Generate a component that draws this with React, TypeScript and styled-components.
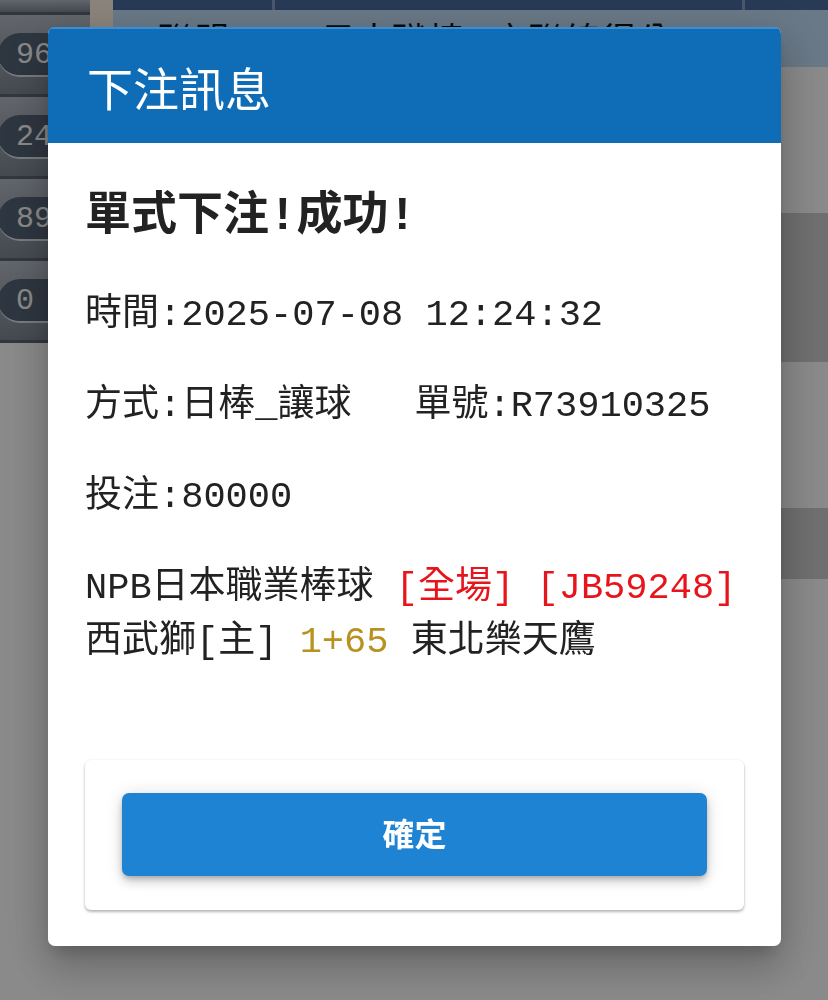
import React from 'react';
import styled, { createGlobalStyle } from 'styled-components';

const mono = `"Liberation Mono", "Noto Sans CJK TC", monospace`;
const sans = `"Noto Sans CJK TC", "Noto Sans", sans-serif`;

const GlobalStyle = createGlobalStyle`
  html, body {
    margin: 0;
    padding: 0;
    background: #ffffff;
    font-family: ${sans};
  }
  * {
    box-sizing: border-box;
  }
`;

// page behind the dialog
const Page = styled.div`
  display: flex;
  min-height: 100vh;
  background: #ffffff;
  overflow: hidden;
`;

const Sidebar = styled.div`
  width: 90px;
  display: flex;
  flex-direction: column;
  align-self: flex-start;
`;

const SideTile = styled.div<{ $h: number }>`
  height: ${(p) => p.$h}px;
  display: flex;
  align-items: center;
  background: linear-gradient(#b6bcc6, #7f8895);
  border-bottom: 3px solid #5d6673;
`;

const CountPill = styled.div`
  margin-left: -2px;
  width: 110px;
  height: 44px;
  border-radius: 22px;
  background: #556477;
  border-bottom: 2px solid #dde4ee;
  color: #ffffff;
  font-family: ${mono};
  font-size: 30px;
  line-height: 44px;
  padding-left: 18px;
`;

const Gutter = styled.div`
  width: 23px;
  height: 67px;
  align-self: flex-start;
  background: #fff4e4;
`;

const Main = styled.div`
  flex: 1;
  display: flex;
  flex-direction: column;
`;

const Grid = styled.div<{ $h: number; $bg: string }>`
  display: grid;
  grid-template-columns: 162px 470px 1fr;
  height: ${(p) => p.$h}px;
  background: ${(p) => p.$bg};
`;

const TopCell = styled.div`
  border-right: 3px solid #8aa0c4;
  &:last-child {
    border-right: none;
  }
`;

const HeadCell = styled.div<{ $align: string }>`
  font-size: 36px;
  color: #111;
  line-height: 56px;
  text-align: ${(p) => p.$align};
  padding-left: ${(p) => (p.$align === 'left' ? '45px' : '0')};
  white-space: nowrap;
  overflow: hidden;
`;

const TableRow = styled.div<{ $h?: number; $shade?: boolean }>`
  height: ${(p) => (p.$h ? `${p.$h}px` : 'auto')};
  flex: ${(p) => (p.$h ? 'none' : '1')};
  background: ${(p) => (p.$shade ? '#cecece' : '#ffffff')};
`;

// dialog
const Overlay = styled.div`
  position: fixed;
  inset: 0;
  background: rgba(0, 0, 0, 0.46);
  display: flex;
  justify-content: center;
  align-items: flex-start;
  padding: 27px 0 0 1px;
`;

const Dialog = styled.div`
  width: 733px;
  background: #ffffff;
  border-radius: 7px;
  overflow: hidden;
  box-shadow: 0 11px 15px -7px rgba(0, 0, 0, 0.2),
    0 24px 38px 3px rgba(0, 0, 0, 0.14), 0 9px 46px 8px rgba(0, 0, 0, 0.12);
`;

const DialogHeader = styled.div`
  height: 116px;
  background: #0f6db7;
  border-top: 2px solid #3a8fd4;
  display: flex;
  align-items: center;
  padding-left: 39px;
`;

const DialogTitle = styled.h2`
  margin: 0;
  color: #ffffff;
  font-family: ${sans};
  font-weight: 400;
  font-size: 46px;
  line-height: 1;
`;

const DialogBody = styled.div`
  padding: 41px 37px 36px;
  display: flex;
  flex-direction: column;
`;

const ResultTitle = styled.h3`
  margin: 0 0 38px;
  font-family: ${mono};
  font-weight: 700;
  font-size: 46px;
  line-height: 66px;
  color: #222;
`;

const InfoList = styled.div`
  display: flex;
  flex-direction: column;
  gap: 37px;
`;

const InfoLine = styled.p`
  margin: 0;
  font-family: ${mono};
  font-size: 37px;
  line-height: 54px;
  color: #222;
  white-space: nowrap;
`;

const OrderNo = styled.span`
  margin-left: 63px;
`;

const Red = styled.span`
  color: #e8141c;
`;

const Gold = styled.span`
  color: #b8911e;
`;

const ActionCard = styled.div`
  margin-top: 91px;
  padding: 33px 37px 34px;
  background: #ffffff;
  border-radius: 6px;
  box-shadow: 0 2px 3px rgba(0, 0, 0, 0.28), 0 0 2px rgba(0, 0, 0, 0.08);
`;

const ConfirmButton = styled.button`
  display: block;
  width: 100%;
  height: 83px;
  padding: 0 0 5px;
  border: none;
  border-radius: 7px;
  background: #1f83d3;
  color: #ffffff;
  font-family: ${sans};
  font-weight: 700;
  font-size: 32px;
  cursor: pointer;
  box-shadow: 0 3px 5px -1px rgba(0, 0, 0, 0.2), 0 6px 10px 0 rgba(0, 0, 0, 0.14),
    0 1px 18px 0 rgba(0, 0, 0, 0.12);
`;

const counts = ['96', '24', '891', '0'];

const App: React.FC = () => {
  return (
    <>
      <GlobalStyle />
      <Page>
        <Sidebar>
          <SideTile $h={15} />
          {counts.map((c) => (
            <SideTile key={c} $h={82}>
              <CountPill>{c}</CountPill>
            </SideTile>
          ))}
        </Sidebar>
        <Gutter />
        <Main>
          <Grid $h={10} $bg="#4a6b9d">
            <TopCell />
            <TopCell />
            <TopCell />
          </Grid>
          <Grid $h={57} $bg="#c3dffa">
            <HeadCell $align="center">聯盟</HeadCell>
            <HeadCell $align="left">日本職棒 - 交聯總得分</HeadCell>
            <HeadCell $align="center" />
          </Grid>
          <TableRow $h={146} />
          <TableRow $h={149} $shade />
          <TableRow $h={146} />
          <TableRow $h={71} $shade />
          <TableRow />
        </Main>
      </Page>

      <Overlay>
        <Dialog>
          <DialogHeader>
            <DialogTitle>下注訊息</DialogTitle>
          </DialogHeader>
          <DialogBody>
            <ResultTitle>單式下注!成功!</ResultTitle>
            <InfoList>
              <InfoLine>時間:2025-07-08 12:24:32</InfoLine>
              <InfoLine>
                方式:日棒_讓球
                <OrderNo>單號:R73910325</OrderNo>
              </InfoLine>
              <InfoLine>投注:80000</InfoLine>
              <InfoLine>
                NPB日本職業棒球 <Red>[全場]</Red> <Red>[JB59248]</Red>
                <br />
                西武獅[主] <Gold>1+65</Gold> 東北樂天鷹
              </InfoLine>
            </InfoList>
            <ActionCard>
              <ConfirmButton type="button">確定</ConfirmButton>
            </ActionCard>
          </DialogBody>
        </Dialog>
      </Overlay>
    </>
  );
};

export default App;
